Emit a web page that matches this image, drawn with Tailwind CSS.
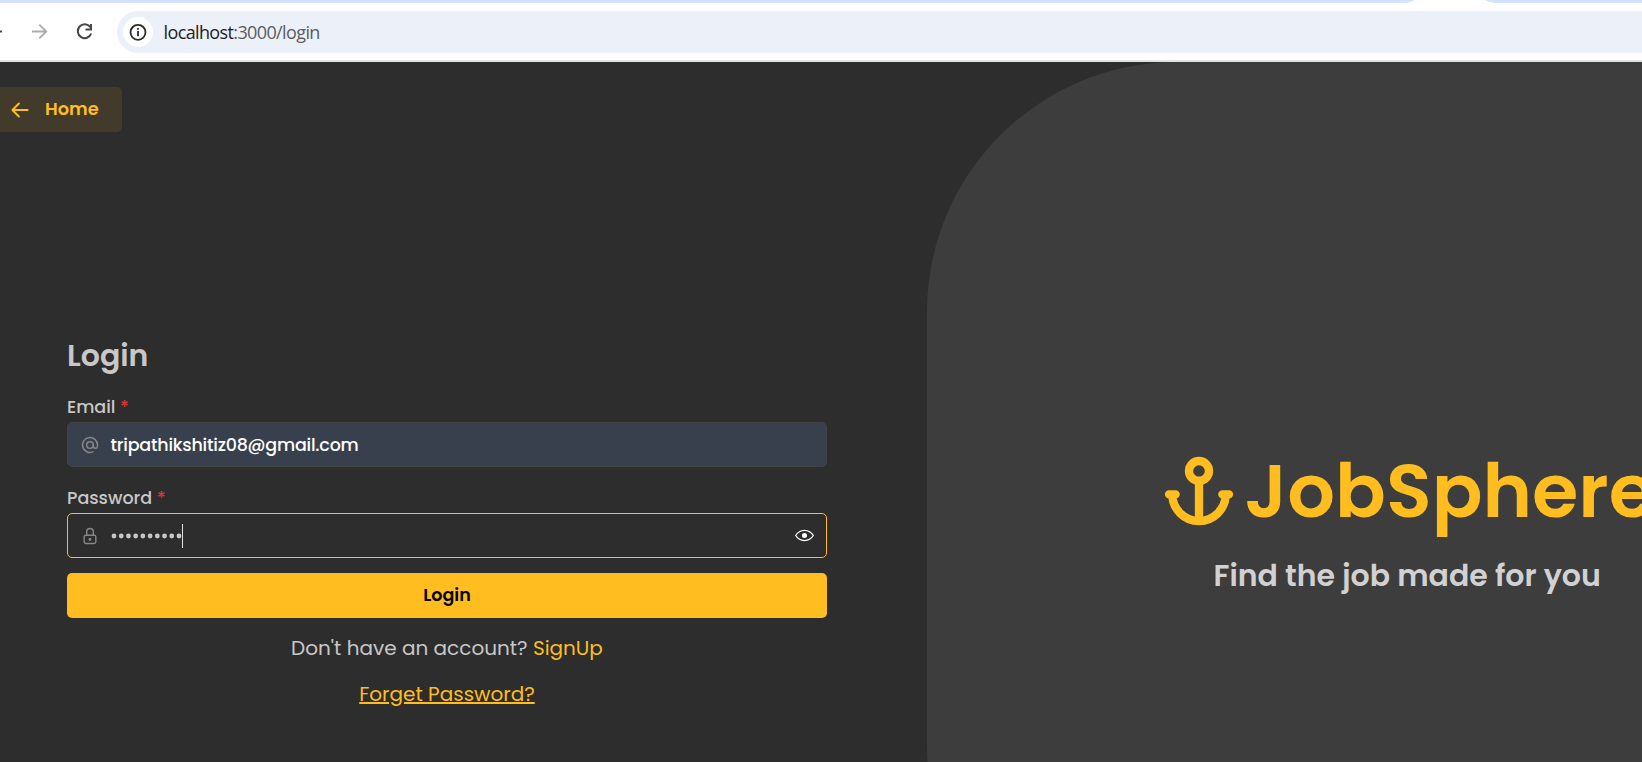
<!DOCTYPE html>
<html lang="en">
<head>
<meta charset="utf-8">
<title>Login</title>
<script src="https://cdn.jsdelivr.net/npm/@tailwindcss/browser@4"></script>
</head>
<body class="w-[1642px] h-[762px] overflow-hidden flex flex-col bg-[#2d2d2d] font-[Poppins,Inter,sans-serif]">
<header class="h-[62px] shrink-0 bg-white border-b-2 border-[#dfe3e1] flex flex-col">
  <svg class="block h-[3px] w-full shrink-0" viewBox="0 0 1642 3"><path fill="#d3e3fd" d="M0 0H1415Q1412 2 1406 3H0ZM1485 0H1642V3H1494Q1488 2 1485 0Z"/></svg>
  <div class="flex mt-2 h-[42px] items-center">
    <svg class="w-[117px] h-[42px] shrink-0" viewBox="0 0 117 42" fill="none" stroke-width="1.8">
      <path stroke="#474747" d="M0 20.500h2"/>
      <path stroke="#a9abad" d="M32 20.500H46M39.300 13.600l7 6.900l-7 6.900"/>
      <path stroke="#474747" stroke-width="2" d="M90.300 16.200A6.900 6.900 0 1 0 91.200 22.500"/>
      <path stroke="#474747" stroke-width="2" d="M91 13v5.500h-5.500"/>
    </svg>
    <div class="flex flex-1 h-[42px] items-center bg-[#ecf0f9] rounded-l-full pl-1.5">
      <svg class="size-[30px] shrink-0" viewBox="0 0 30 30"><circle cx="15" cy="15" r="15" fill="#fff"/><circle cx="15" cy="15.300" r="7.500" fill="none" stroke="#2a2b2d" stroke-width="1.800"/><path stroke="#2a2b2d" stroke-width="1.800" d="M15 14v5.300M15 10.900v1.800"/></svg>
      <span class="ml-[10.500px] mt-px text-[18px] text-[#5a5d61] font-['Segoe_UI','Open_Sans',sans-serif] tracking-[-0.620px] whitespace-nowrap"><span class="text-[#1f2023]">localhost</span>:3000/login</span>
    </div>
  </div>
</header>
<main class="flex flex-1 min-h-0 overflow-hidden">
  <section class="w-[927px] shrink-0 flex flex-col pt-[25px]">
    <a class="w-[122px] h-[45px] flex items-center bg-[#423a2b] rounded-r-[5px] text-[#ffbd20] pl-[7px]">
      <svg class="size-[26px]" viewBox="0 0 24 24" fill="none" stroke="currentColor" stroke-width="1.800" stroke-linecap="round" stroke-linejoin="round"><path d="M5 12h14M5 12l6 6M5 12l6-6"/></svg>
      <span class="ml-[12px] text-[17.800px] font-semibold">Home</span>
    </a>
    <div class="ml-[67px] w-[760px] mt-[203px] flex flex-col text-[#c8c8c8]">
      <h1 class="h-10 leading-[42px] text-[30px] font-semibold">Login</h1>
      <label class="mt-[18px] h-[29px] leading-[29px] text-[17.500px] font-medium">Email <span class="text-[#e03131]">*</span></label>
      <div class="h-[45px] flex items-center rounded-[5px] border border-[#424242] bg-[#38404d] pl-3 text-white">
        <svg class="size-5 text-[#868686]" viewBox="0 0 24 24" fill="none" stroke="currentColor" stroke-width="1.800" stroke-linecap="round"><circle cx="12" cy="12" r="4"/><path d="M16 12v1.500a2.500 2.500 0 0 0 5 0V12a9 9 0 1 0-5.500 8.280"/></svg>
        <span class="ml-[10.500px] mt-px text-[17.500px] tracking-[-0.220px] font-medium">tripathikshitiz08@gmail.com</span>
      </div>
      <label class="mt-[17px] h-[29px] leading-[29px] text-[17.500px] font-medium">Password <span class="text-[#e03131]">*</span></label>
      <div class="h-[45px] flex items-center rounded-[5px] border border-[#ffbd20] pl-3 pr-3">
        <svg class="size-5 text-[#868686]" viewBox="0 0 24 24" fill="none" stroke="currentColor" stroke-width="1.700"><rect x="5" y="11" width="14" height="10" rx="2"/><circle cx="12" cy="16" r="1"/><path d="M8 11V7a4 4 0 1 1 8 0v4"/></svg>
        <svg class="ml-[10px] w-[73px] h-6" viewBox="0 0 73 24" fill="#e0e0e0"><path stroke="#c8c8c8" stroke-width="4.800" stroke-linecap="round" stroke-dasharray="0 7.220" d="M4 12H69.500"/><path d="M72 0h1v24h-1z"/></svg>
        <svg class="ml-auto size-[19px] text-white" viewBox="0 0 15 15" fill="currentColor"><path fill-rule="evenodd" d="M7.500 11C4.803 11 2.530 9.622 1.096 7.500C2.530 5.378 4.803 4 7.500 4C10.197 4 12.470 5.378 13.904 7.500C12.470 9.622 10.197 11 7.500 11ZM7.500 3C4.308 3 1.656 4.706.076 7.235C-.025 7.397-.025 7.603.076 7.765C1.656 10.294 4.308 12 7.500 12C10.692 12 13.344 10.294 14.924 7.765C15.025 7.603 15.025 7.397 14.924 7.235C13.344 4.706 10.692 3 7.500 3ZM7.500 9.500A2 2 0 1 0 7.500 5.500A2 2 0 1 0 7.500 9.500Z"/></svg>
      </div>
      <button class="mt-[15px] h-[45px] rounded-[5px] bg-[#ffbd20] text-black text-[17.500px] font-semibold">Login</button>
      <p class="mt-[15px] h-[30px] leading-[30px] text-center text-[20px] whitespace-nowrap">Don't have an account? <span class="text-[#ffbd20]">SignUp</span></p>
      <p class="mt-4 h-[30px] leading-[30px] text-center text-[20px] text-[#ffbd20]"><span class="underline">Forget Password?</span></p>
    </div>
  </section>
  <section class="flex-1 min-w-0 h-[933px] bg-[#3d3d3d] rounded-l-[250px] flex flex-col pt-[389px]">
    <div class="flex h-20 ml-[232px] text-[#ffbd20] items-center">
      <svg class="size-20 shrink-0" viewBox="0 0 24 24" fill="none" stroke="currentColor" stroke-width="2.500" stroke-linecap="round" stroke-linejoin="round"><path d="M12 9v12M4 13a8 8 0 0 0 16 0M21 13h-2M5 13H3"/><circle cx="12" cy="6" r="3"/></svg>
      <span class="ml-[5.500px] text-[75px] leading-20 font-semibold whitespace-nowrap">JobSphere</span>
    </div>
    <p class="ml-[286.500px] mt-[23px] h-11 leading-[44px] text-[30px] font-semibold text-[#d1d1d1] whitespace-nowrap">Find the job made for you</p>
  </section>
</main>
</body>
</html>
